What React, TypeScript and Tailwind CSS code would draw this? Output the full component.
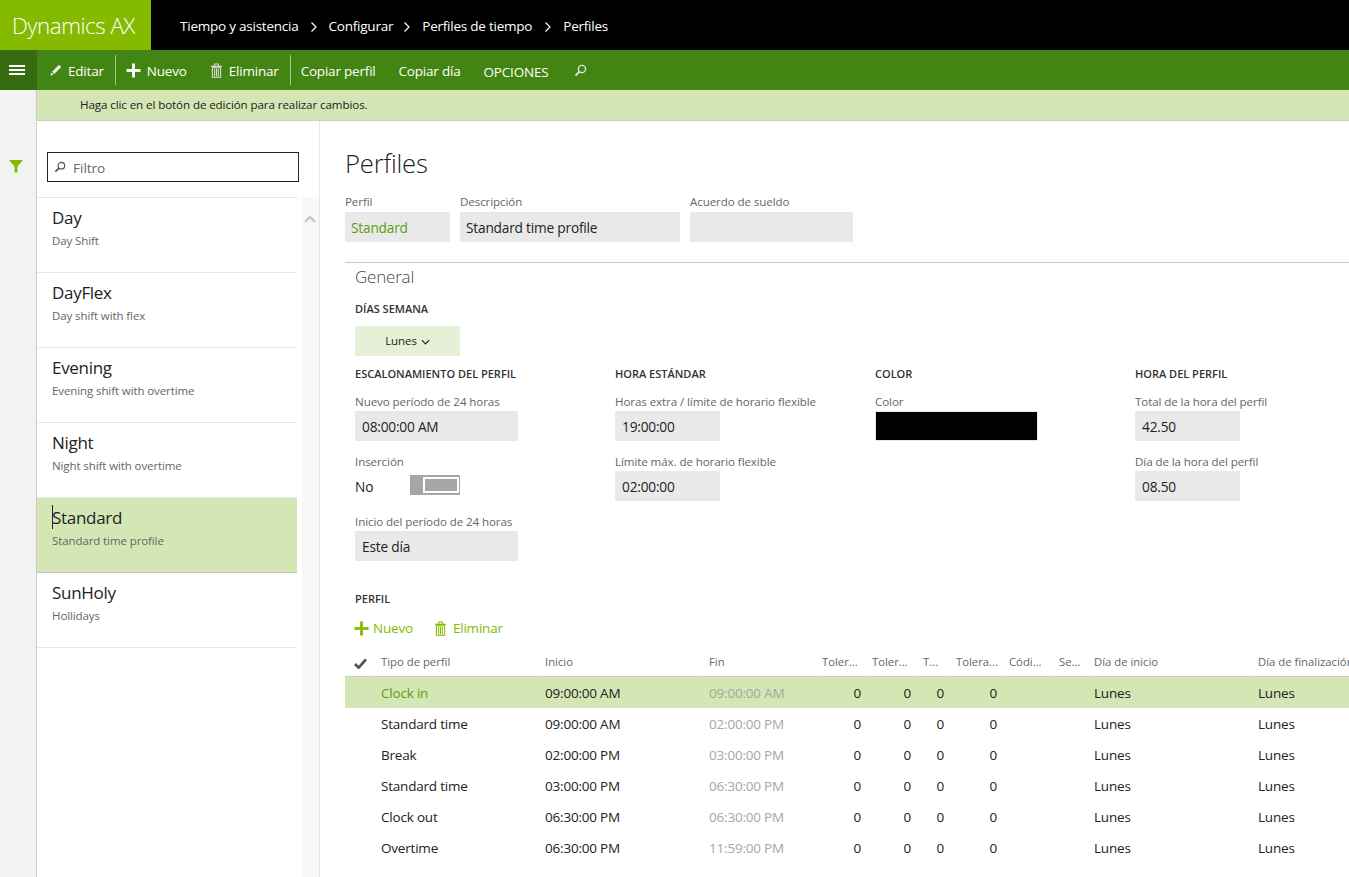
import React from "react";

const font = "font-['Open_Sans','Noto_Sans',sans-serif]";

function Pencil({ cls }: { cls: string }) {
  return (
    <svg viewBox="0 0 16 16" className={cls} fill="currentColor">
      <path d="M11.5 2 14 4.5 6 12.5 3.5 10Z" />
      <path d="M2.8 10.8 5.2 13.2 1.5 14.5Z" />
    </svg>
  );
}
function Plus({ cls }: { cls: string }) {
  return (
    <svg viewBox="0 0 16 16" className={cls} fill="currentColor">
      <rect x="6.5" y="0.5" width="3" height="15" />
      <rect x="0.5" y="6.5" width="15" height="3" />
    </svg>
  );
}
function Trash({ cls }: { cls: string }) {
  return (
    <svg viewBox="0 0 12 16" className={cls} fill="none" stroke="currentColor" strokeWidth="1.1">
      <path d="M0 3.5H12M4 3.5V1H8V3.5" />
      <rect x="1.5" y="5" width="9" height="10.4" />
      <path d="M4 6V14.5M6 6V14.5M8 6V14.5" />
    </svg>
  );
}
function Search({ cls }: { cls: string }) {
  return (
    <svg viewBox="0 0 16 16" className={cls} fill="none" stroke="currentColor" strokeWidth="1.6">
      <circle cx="9.8" cy="6.2" r="4.4" />
      <path d="M6.6 9.4 1.8 14.2" strokeWidth="2.2" />
    </svg>
  );
}

function Chevron() {
  return (
    <svg viewBox="0 0 8 12" className="w-[8px] h-[12px] text-white" fill="none" stroke="currentColor" strokeWidth="1.2">
      <path d="M1.5 1.5 6 6 1.5 10.5" />
    </svg>
  );
}

function Field({ label, value, w, green, mb, top }: { label: string; value: string; w: string; green?: boolean; mb?: string; top?: boolean }) {
  return (
    <div className={mb}>
      <div className={`text-[11.6px] tracking-[-0.1px] leading-[18px] text-[#666] whitespace-nowrap ${top ? "pb-[1px]" : ""}`}>{label}</div>
      <div className={`${w} h-[30px] bg-[#e9e9e9] flex items-center ${top ? "pl-[6px]" : "pl-[7px]"} pt-[2px] text-[13.7px] tracking-[-0.2px] ${green ? "text-[#5c9e0e]" : "text-[#222]"}`}>
        {value}
      </div>
    </div>
  );
}

function Heading({ children }: { children: React.ReactNode }) {
  return <div className="text-[11px] leading-[16px] font-semibold text-[#333] whitespace-nowrap">{children}</div>;
}

const items = [
  ["Day", "Day Shift"],
  ["DayFlex", "Day shift with flex"],
  ["Evening", "Evening shift with overtime"],
  ["Night", "Night shift with overtime"],
  ["Standard", "Standard time profile"],
  ["SunHoly", "Hollidays"],
];

const rows = [
  ["Clock in", "09:00:00 AM", "09:00:00 AM"],
  ["Standard time", "09:00:00 AM", "02:00:00 PM"],
  ["Break", "02:00:00 PM", "03:00:00 PM"],
  ["Standard time", "03:00:00 PM", "06:30:00 PM"],
  ["Clock out", "06:30:00 PM", "06:30:00 PM"],
  ["Overtime", "06:30:00 PM", "11:59:00 PM"],
];

const grid = "grid grid-cols-[30px_164px_164px_113px_50px_51px_33px_53px_50px_35px_164px_200px]";
const headers = ["Tipo de perfil", "Inicio", "Fin", "Toler...", "Toler...", "T...", "Tolera...", "Códi...", "Se...", "Día de inicio", "Día de finalización"];

export default function App() {
  return (
    <div className={`${font} w-[1349px] h-[877px] overflow-hidden bg-white flex flex-col`}>
      <header className="h-[50px] bg-black flex items-center text-white shrink-0">
        <div className="w-[151px] h-full bg-[#84bb00] flex items-center pl-[12px] pt-[2px] text-[22.4px] font-light tracking-[-0.5px] whitespace-nowrap">Dynamics AX</div>
        <nav className="flex items-center pl-[29px] pt-[3px] text-[13.5px] tracking-[-0.23px] whitespace-nowrap">
          <span>Tiempo y asistencia</span>
          <span className="ml-[11px] mr-[11px] flex"><Chevron /></span>
          <span>Configurar</span>
          <span className="ml-[10px] mr-[11px] flex"><Chevron /></span>
          <span>Perfiles de tiempo</span>
          <span className="ml-[12px] mr-[11px] flex"><Chevron /></span>
          <span>Perfiles</span>
        </nav>
      </header>

      <div className="h-[40px] bg-[#438512] flex items-center text-white text-[13.5px] tracking-[-0.2px] whitespace-nowrap shrink-0">
        <div className="w-[37px] h-full bg-[#366b10] flex flex-col items-center justify-center gap-[2px] pr-[3px]">
          <div className="w-[16px] h-[2px] bg-white" />
          <div className="w-[16px] h-[2px] bg-white" />
          <div className="w-[16px] h-[2px] bg-white" />
        </div>
        <div className="flex items-center pl-[12px] gap-[5px]"><Pencil cls="w-[14px] h-[14px] text-[#eee]" /><span className="pt-[3px]">Editar</span></div>
        <div className="w-px h-[30px] bg-[#a9c490] ml-[11px]" />
        <div className="flex items-center pl-[10px] gap-[6px]"><Plus cls="w-[15px] h-[15px]" /><span className="pt-[3px]">Nuevo</span></div>
        <div className="flex items-center pl-[24px] gap-[7px]"><Trash cls="w-[11px] h-[15px] text-[#ddd]" /><span className="pt-[3px]">Eliminar</span></div>
        <div className="w-px h-[30px] bg-[#a9c490] ml-[11px]" />
        <span className="ml-[10px] pt-[3px]">Copiar perfil</span>
        <span className="ml-[23px] pt-[3px]">Copiar día</span>
        <span className="ml-[23px] pt-[5px]">OPCIONES</span>
        <Search cls="w-[13px] h-[13px] ml-[26px] text-[#e6e6e6]" />
      </div>

      <div className="flex-1 flex min-h-0">
        <aside className="w-[37px] bg-[#f2f2f2] border-r border-[#cccccc] shrink-0 flex justify-center pt-[69px] pr-[4px]">
          <svg viewBox="0 0 14 14" className="w-[14px] h-[14px] text-[#84bb00]" fill="currentColor">
            <path d="M0 1H14L8.5 7.5V13.5H5.5V7.5Z" />
          </svg>
        </aside>

        <div className="flex-1 flex flex-col min-w-0">
          <div className="h-[31px] bg-[#d5e6b5] border-b border-[#cccccc] pl-[43px] flex items-center text-[11.6px] tracking-[-0.1px] text-[#222] shrink-0">
            Haga clic en el botón de edición para realizar cambios.
          </div>

          <div className="flex-1 flex min-h-0">
            <div className="w-[283px] shrink-0 border-r border-[#e6e6e6] flex">
              <div className="w-[260px] shrink-0 pt-[31px]">
                <div className="ml-[10px] w-[252px] h-[30px] border border-[#222] flex items-center pl-[6px] gap-[7px] text-[13.5px] text-[#666]">
                  <Search cls="w-[12px] h-[12px] text-[#555]" />
                  <span className="pt-[3px]">Filtro</span>
                </div>
                <div className="mt-[15px] border-t border-[#e6e6e6]">
                  {items.map(([t, d]) => {
                    const sel = t === "Standard";
                    return (
                      <div key={t} className={`h-[75px] pl-[15px] pt-[8px] border-b ${sel ? "bg-[#d5e6b5] border-[#c4c4c4]" : "border-[#e6e6e6]"} relative`}>
                        <div className="text-[17px] leading-[24px] text-[#222] tracking-[-0.3px]">{t}</div>
                        <div className="text-[11.5px] leading-[20px] text-[#666] mt-[1px] tracking-[-0.1px]">{d}</div>
                        {sel && <div className="absolute left-[15px] top-[7px] w-px h-[24px] bg-[#1a1a60]" />}
                      </div>
                    );
                  })}
                </div>
              </div>
              <div className="ml-[5px] flex-1 mt-[76px] bg-[#f8f8f8] flex justify-center pt-[18px] pr-[2px]">
                <svg viewBox="0 0 12 8" className="w-[12px] h-[8px] text-[#c8c8c8]" fill="none" stroke="currentColor" strokeWidth="2.4">
                  <path d="M1 7 6 2 11 7" />
                </svg>
              </div>
            </div>

            <main className="flex-1 min-w-0 pl-[25px] overflow-hidden">
              <h1 className="text-[25.6px] leading-[36px] font-light text-[#222] mt-[25px] tracking-[-0.2px]">Perfiles</h1>
              <div className="flex gap-[10px] mt-[11px]">
                <Field top label="Perfil" value="Standard" w="w-[105px]" green />
                <Field top label="Descripción" value="Standard time profile" w="w-[220px]" />
                <Field top label="Acuerdo de sueldo" value="" w="w-[163px]" />
              </div>
              <div className="h-px bg-[#c8c8c8] mt-[20px]" />
              <div className="pl-[10px]">
                <div className="text-[17px] leading-[26px] pt-[1px] font-light text-[#444] tracking-[-0.2px] box-content">General</div>
                <div className="mt-[11px]"><Heading>DÍAS SEMANA</Heading></div>
                <div className="w-[105px] h-[30px] mt-[9px] bg-[#e6f0d6] flex items-center justify-center gap-[4px] text-[11.5px] tracking-[-0.1px] text-[#222]">
                  Lunes
                  <svg viewBox="0 0 10 6" className="w-[9px] h-[6px] mt-[2px]" fill="none" stroke="currentColor" strokeWidth="1.3"><path d="M1 1 5 5 9 1" /></svg>
                </div>
                <div className="grid grid-cols-[260px_260px_260px_260px] mt-[10px]">
                  <div>
                    <Heading>ESCALONAMIENTO DEL PERFIL</Heading>
                    <div className="mt-[11px]"><Field label="Nuevo período de 24 horas" value="08:00:00 AM" w="w-[163px]" mb="mb-[12px]" /></div>
                    <div className="text-[11.6px] tracking-[-0.1px] leading-[18px] text-[#666]">Inserción</div>
                    <div className="flex items-center h-[20px] mt-[4px]">
                      <span className="w-[55px] text-[13.7px] text-[#222] pt-[4px]">No</span>
                      <div className="w-[50px] h-[20px] bg-[#a6a6a6] pt-[2px] pb-[2px] pr-[1px] pl-[13px]">
                        <div className="h-full border-2 border-white" />
                      </div>
                    </div>
                    <div className="mt-[18px]"><Field label="Inicio del período de 24 horas" value="Este día" w="w-[163px]" /></div>
                  </div>
                  <div>
                    <Heading>HORA ESTÁNDAR</Heading>
                    <div className="mt-[11px]"><Field label="Horas extra / límite de horario flexible" value="19:00:00" w="w-[105px]" mb="mb-[12px]" /></div>
                    <Field label="Límite máx. de horario flexible" value="02:00:00" w="w-[105px]" />
                  </div>
                  <div>
                    <Heading>COLOR</Heading>
                    <div className="mt-[11px] text-[11.6px] tracking-[-0.1px] leading-[18px] text-[#666]">Color</div>
                    <div className="w-[163px] h-[30px] bg-black border border-[#e6e6e6]" />
                  </div>
                  <div>
                    <Heading>HORA DEL PERFIL</Heading>
                    <div className="mt-[11px]"><Field label="Total de la hora del perfil" value="42.50" w="w-[105px]" mb="mb-[12px]" /></div>
                    <Field label="Día de la hora del perfil" value="08.50" w="w-[105px]" />
                  </div>
                </div>
                <div className="mt-[30px]"><Heading>PERFIL</Heading></div>
                <div className="flex items-center mt-[9px] h-[24px] text-[13.5px] tracking-[-0.2px] text-[#84bb00]">
                  <Plus cls="w-[15px] h-[15px] -ml-[1px]" />
                  <span className="ml-[4px]">Nuevo</span>
                  <Trash cls="w-[11px] h-[15px] ml-[22px]" />
                  <span className="ml-[7px]">Eliminar</span>
                </div>
              </div>
              <div className="mt-[10px] w-[1115px]">
                <div className={`${grid} h-[27px] items-center text-[11.3px] text-[#666] whitespace-nowrap`}>
                  <div className="h-full border-b border-[#cccccc] flex items-center pl-[9px]">
                    <svg viewBox="0 0 14 12" className="w-[13px] h-[11px] text-[#555]" fill="none" stroke="currentColor" strokeWidth="3"><path d="M1 6.5 5 10.5 13 1.5" /></svg>
                  </div>
                  {headers.map((h, i) => (
                    <div key={i} className="h-full border-b border-l border-l-white border-[#cccccc] flex items-center pl-[5px] pb-[2px]">{h}</div>
                  ))}
                </div>
                {rows.map((r, i) => (
                  <div key={i} className={`${grid} h-[31px] items-center pt-[2px] text-[13.5px] tracking-[-0.2px] text-[#222] whitespace-nowrap ${i === 0 ? "bg-[#d5e6b5]" : ""}`}>
                    <div />
                    <div className={`pl-[6px] ${i === 0 ? "text-[#5c9e0e]" : ""}`}>{r[0]}</div>
                    <div className="pl-[6px]">{r[1]}</div>
                    <div className={`pl-[6px] ${i === 0 ? "text-[#a3a89b]" : "text-[#a6a6a6]"}`}>{r[2]}</div>
                    <div className="text-right pr-[5px]">0</div>
                    <div className="text-right pr-[6px]">0</div>
                    <div className="text-right pr-[6px]">0</div>
                    <div className="text-right pr-[6px]">0</div>
                    <div />
                    <div />
                    <div className="pl-[6px]">Lunes</div>
                    <div className="pl-[6px]">Lunes</div>
                  </div>
                ))}
              </div>
            </main>
          </div>
        </div>
      </div>
    </div>
  );
}
